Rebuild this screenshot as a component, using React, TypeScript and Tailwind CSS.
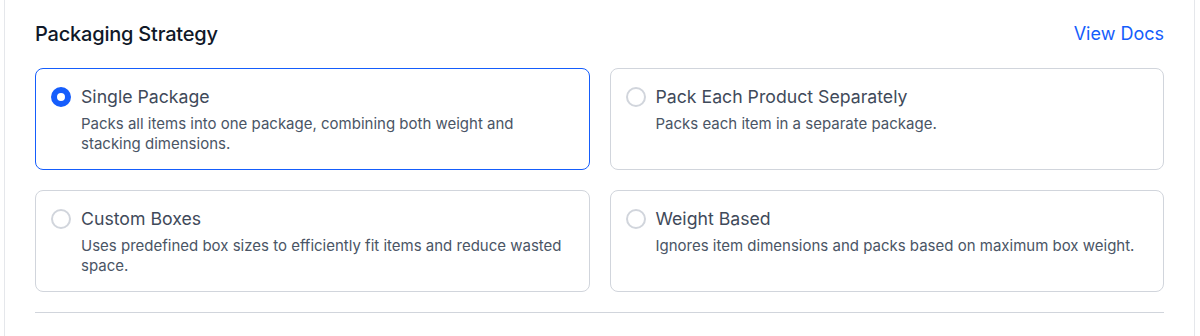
import { useState } from 'react';

const options = [
  {
    id: 'single',
    title: 'Single Package',
    desc: 'Packs all items into one package, combining both weight and stacking dimensions.',
  },
  {
    id: 'separate',
    title: 'Pack Each Product Separately',
    desc: 'Packs each item in a separate package.',
  },
  {
    id: 'boxes',
    title: 'Custom Boxes',
    desc: 'Uses predefined box sizes to efficiently fit items and reduce wasted space.',
  },
  {
    id: 'weight',
    title: 'Weight Based',
    desc: 'Ignores item dimensions and packs based on maximum box weight.',
  },
];

export default function App() {
  const [selected, setSelected] = useState('single');

  return (
    <div className="min-h-[336px] bg-white font-['Inter','Liberation_Sans',sans-serif]">
      <div className="ml-[4px] w-[1191px] min-h-[336px] border-x border-[#e5e7eb] px-[30px] pt-[20px]">
        {/* Header */}
        <div className="flex items-center justify-between mb-[20px]">
          <h2 className="text-[20px] leading-7 font-medium tracking-[-0.01em] text-[#101828]">
            Packaging Strategy
          </h2>
          <a href="#" className="text-[18px] leading-7 font-normal text-[#155dfc]">
            View Docs
          </a>
        </div>

        {/* Options */}
        <div className="grid grid-cols-2 gap-x-5 gap-y-5">
          {options.map((opt) => {
            const active = selected === opt.id;
            return (
              <button
                key={opt.id}
                type="button"
                onClick={() => setSelected(opt.id)}
                className={`flex h-[102px] items-start gap-[10px] rounded-lg border pl-[15px] pr-4 pt-4 text-left ${
                  active ? 'border-[#155dfc]' : 'border-[#d1d5dc]'
                }`}
              >
                <span
                  className={`mt-[2px] h-[20px] w-[20px] shrink-0 rounded-full bg-white ${
                    active ? 'border-[6px] border-[#155dfc]' : 'border-2 border-[#d1d5dc]'
                  }`}
                />
                <span className="flex flex-col">
                  <span className="text-[17.7px] leading-6 font-normal text-[#3f4a5a]">{opt.title}</span>
                  <span className="mt-[5px] text-[15px] leading-5 text-[#4a5565]">{opt.desc}</span>
                </span>
              </button>
            );
          })}
        </div>

        <div className="mt-5 border-t border-[#d1d5dc]" />
      </div>
    </div>
  );
}
